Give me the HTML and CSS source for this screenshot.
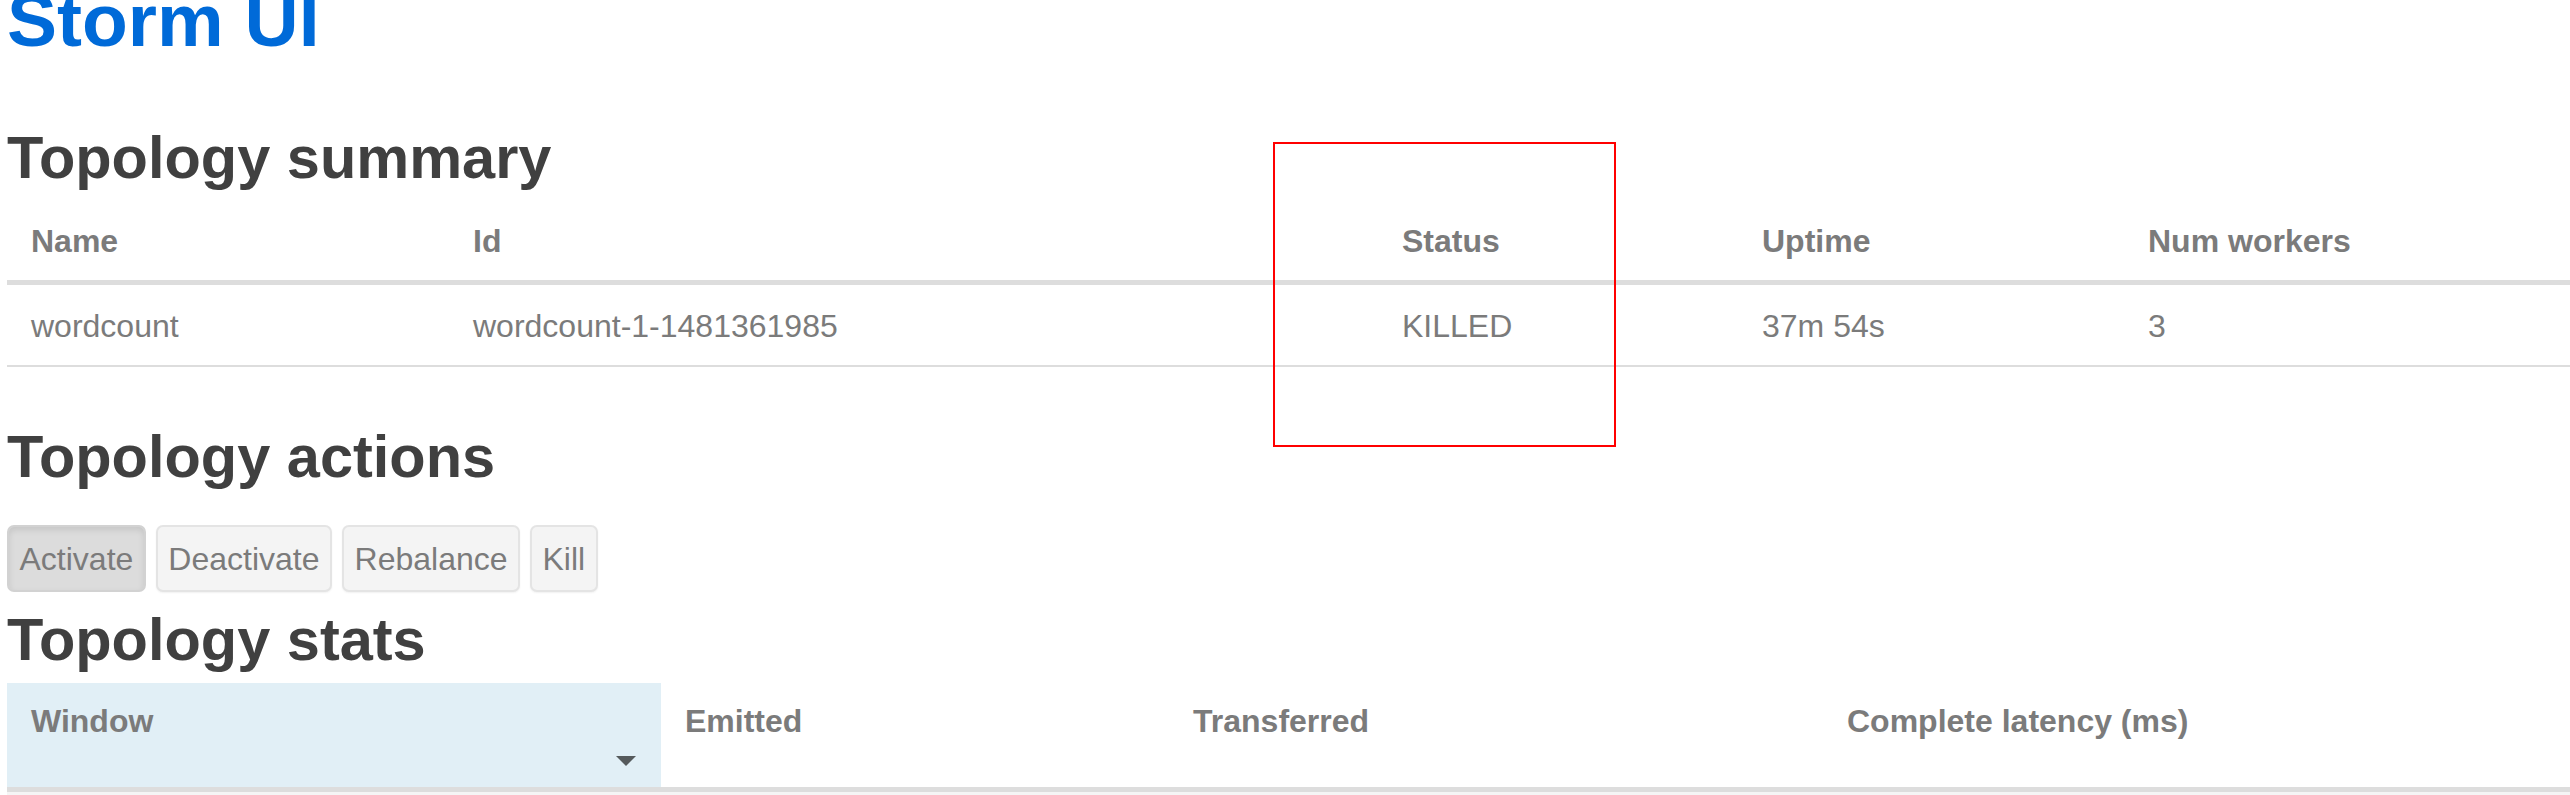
FILE: index.html
```html
<!DOCTYPE html>
<html lang="en">
<head>
<meta charset="utf-8">
<title>Storm UI</title>
<link rel="stylesheet" href="styles.css">
</head>
<body>
<div class="page">
  <h1 class="brand">Storm UI</h1>

  <h2 class="section-title summary-title">Topology summary</h2>
  <table class="grid summary-table">
    <thead>
      <tr>
        <th class="c-name">Name</th>
        <th class="c-id">Id</th>
        <th class="c-status">Status</th>
        <th class="c-uptime">Uptime</th>
        <th class="c-workers">Num workers</th>
      </tr>
    </thead>
    <tbody>
      <tr>
        <td>wordcount</td>
        <td>wordcount-1-1481361985</td>
        <td>KILLED</td>
        <td>37m 54s</td>
        <td>3</td>
      </tr>
    </tbody>
  </table>

  <h2 class="section-title actions-title">Topology actions</h2>
  <div class="actions">
    <button class="btn btn-active" type="button">Activate</button>
    <button class="btn" type="button">Deactivate</button>
    <button class="btn" type="button">Rebalance</button>
    <button class="btn" type="button">Kill</button>
  </div>

  <h2 class="section-title stats-title">Topology stats</h2>
  <table class="grid stats-table">
    <thead>
      <tr>
        <th class="s-window sorted">
          <div>Window</div>
          <div class="sort-row"><span class="sort-arrow"></span></div>
        </th>
        <th class="s-emitted">Emitted</th>
        <th class="s-transferred">Transferred</th>
        <th class="s-latency">Complete latency (ms)</th>
      </tr>
    </thead>
    <tbody>
      <tr class="striped">
        <td></td><td></td><td></td><td></td>
      </tr>
    </tbody>
  </table>

  <div class="highlight-box"></div>
</div>
</body>
</html>
```

FILE: styles.css
```css
html, body {
  margin: 0;
  padding: 0;
  background: #ffffff;
  overflow: hidden;
}

body {
  font-family: "Liberation Sans", Arial, Helvetica, sans-serif;
  font-size: 32px;
  line-height: 46px;
  color: #7b7b7b;
}

.page {
  position: relative;
  display: flow-root;
  padding-left: 7px;
}

.brand {
  margin: -20px 0 0 0;
  font-size: 75px;
  line-height: 80px;
  font-weight: bold;
  color: #006ad8;
}

.section-title {
  margin: 0;
  font-size: 59.5px;
  line-height: 65px;
  font-weight: bold;
  color: #404040;
}

.summary-title { margin-top: 65px; }
.actions-title { margin-top: 57px; }
.stats-title { margin-top: 15px; }

.grid {
  width: 100%;
  table-layout: fixed;
  border-collapse: separate;
  border-spacing: 0;
}

.grid th,
.grid td {
  box-sizing: border-box;
  text-align: left;
  padding: 0 24px;
  white-space: nowrap;
}

.grid th {
  font-weight: bold;
  color: #7b7b7b;
}

.summary-table { margin-top: 8px; }

.summary-table th {
  padding-top: 20px;
  padding-bottom: 16px;
  border-bottom: 5px solid #dddddd;
  vertical-align: bottom;
}

.summary-table td {
  padding-top: 18px;
  padding-bottom: 16px;
  border-bottom: 2px solid #dddddd;
}

.c-name { width: 442px; }
.c-id { width: 929px; }
.c-status { width: 360px; }
.c-uptime { width: 386px; }

.actions {
  display: flex;
  gap: 10px;
  margin-top: 36px;
}

.btn {
  font-family: "Liberation Sans", Arial, Helvetica, sans-serif;
  font-size: 32px;
  line-height: 46px;
  color: #7b7b7b;
  background: #f4f4f4;
  border: 2px solid #e4e4e4;
  border-radius: 7px;
  padding: 9px 10.5px 8px;
  margin: 0;
  box-sizing: border-box;
  box-shadow: 0 1px 2px rgba(0, 0, 0, 0.06);
}

.btn-active {
  background: #dcdcdc;
  border-color: #d2d2d2;
  box-shadow: inset 0 3px 6px rgba(0, 0, 0, 0.1);
}

.stats-table { margin-top: 11px; }

.stats-table th {
  padding-top: 15px;
  padding-bottom: 21px;
  border-bottom: 5px solid #dddddd;
  vertical-align: top;
}

.s-window { width: 654px; }
.s-emitted { width: 508px; }
.s-transferred { width: 654px; }

.sorted {
  background: #e1eff6;
}

.sort-row {
  display: flex;
  justify-content: flex-end;
  margin-top: 12px;
  height: 10px;
  padding-right: 1px;
}

.sort-arrow {
  width: 0;
  height: 0;
  border-left: 10px solid transparent;
  border-right: 10px solid transparent;
  border-top: 10px solid #555a5c;
}

.stats-table td {
  height: 40px;
  padding: 0;
}

.striped td {
  background: #f5f5f5;
}

.highlight-box {
  position: absolute;
  left: 1273px;
  top: 142px;
  width: 343px;
  height: 305px;
  box-sizing: border-box;
  border: 2px solid #ff0000;
  pointer-events: none;
}
```
